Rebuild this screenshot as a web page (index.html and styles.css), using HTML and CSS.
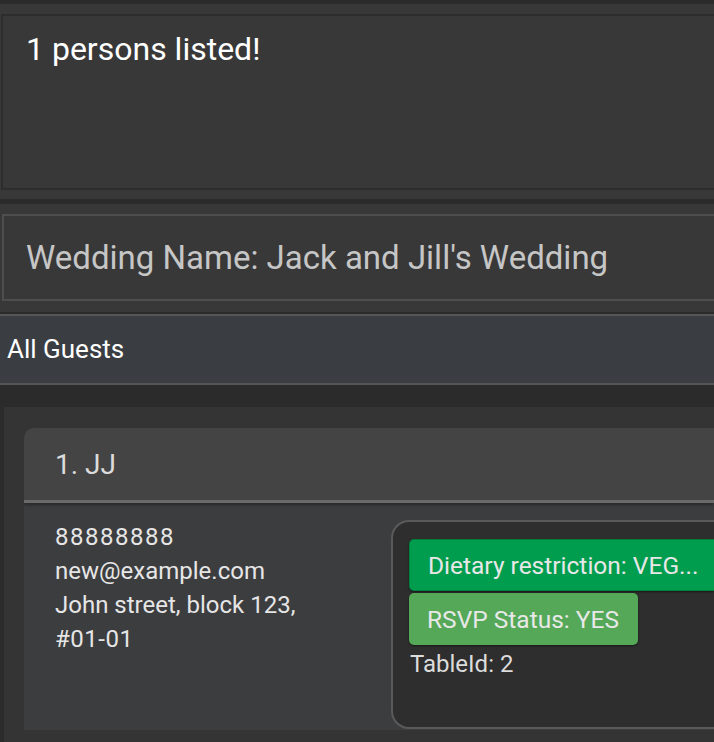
FILE: index.html
```html
<!DOCTYPE html>
<html>
<head>
<meta charset="utf-8">
<link rel="stylesheet" href="styles.css">
</head>
<body>
<div class="app">
  <div class="top-strip"></div>
  <section class="result-pane">
    <div class="result-box">1 persons listed!</div>
  </section>
  <div class="sep"></div>
  <section class="wedding-pane">
    <div class="wedding-box">Wedding Name: Jack and Jill's Wedding</div>
  </section>
  <div class="list-title">All Guests</div>
  <section class="list-area">
    <div class="list-panel">
      <article class="card">
        <header class="card-head">1. JJ</header>
        <div class="card-body">
          <div class="contact">
            <div class="phone">88888888</div>
            <div>new@example.com</div>
            <div>John street, block 123,</div>
            <div class="unit">#01-01</div>
          </div>
          <div class="details">
            <div class="tag tag-diet">Dietary restriction: VEG...</div>
            <div class="tag tag-rsvp">RSVP Status: YES</div>
            <div class="table-id">TableId: 2</div>
          </div>
        </div>
      </article>
    </div>
  </section>
</div>
</body>
</html>
```
FILE: styles.css
```css
html, body {
  margin: 0;
  padding: 0;
  background: #2b2b2b;
  overflow: hidden;
}
body {
  width: 714px;
  height: 742px;
  font-family: Roboto, "Noto Sans", sans-serif;
}
.app {
  width: 714px;
}
.top-strip {
  height: 4px;
  background: #2b2b2b;
}
.result-pane {
  background: #383838;
  padding: 10px 0 9px 1px;
}
.result-box {
  height: 176px;
  box-sizing: border-box;
  border: 2px solid #2d2d2d;
  border-right: none;
  background: #383838;
  color: #ffffff;
  font-size: 32px;
  line-height: 38px;
  padding: 14px 0 0 23px;
}
.sep {
  height: 5px;
  background: #2b2b2b;
}
.wedding-pane {
  background: #383838;
  padding: 10px 0 11px 2px;
}
.wedding-box {
  height: 87px;
  box-sizing: border-box;
  border: 2px solid #4e4e4e;
  border-right: none;
  color: #c6c6c6;
  font-size: 33px;
  display: flex;
  align-items: center;
  padding-left: 22px;
}
.list-title {
  border-top: 2px solid #2b2b2b;
  height: 69px;
  background: #3a3e42;
  border-bottom: 2px solid #555555;
  box-shadow: inset 0 2px 0 #555555;
  color: #ffffff;
  font-size: 26px;
  display: flex;
  align-items: center;
  padding-left: 7px;
}
.list-area {
  padding: 22px 0 0 4px;
  background: #2b2b2b;
}
.list-panel {
  background: #343434;
  padding: 21px 0 12px 20px;
}
.card {
  border-radius: 10px 0 0 0;
  overflow: hidden;
  background: #3c3d3f;
}
.card-head {
  height: 72px;
  background: #444444;
  color: #dcdcdc;
  font-size: 28px;
  display: flex;
  align-items: center;
  padding-left: 31px;
  border-bottom: 3px solid #6a6a6a;
  box-shadow: 0 2px 3px rgba(0,0,0,0.35);
  position: relative;
}
.card-body {
  display: flex;
  padding: 17px 0 0 31px;
  height: 210px;
}
.contact {
  width: 336px;
  flex: none;
  color: #e6e6e6;
  font-size: 24px;
  line-height: 34px;
}
.phone {
  letter-spacing: 1.5px;
}
.unit {
  letter-spacing: 0.5px;
}
.details {
  flex: 1;
  min-width: 0;
  height: 209px;
  box-sizing: border-box;
  border: 2px solid #5a5a5a;
  border-right: none;
  border-radius: 18px 0 0 18px;
  background: #2e2e2e;
  padding: 17px 0 0 16px;
  display: flex;
  flex-direction: column;
  align-items: flex-start;
  gap: 2px;
  overflow: hidden;
}
.tag {
  font-size: 24.5px;
  color: #e8e8e8;
  white-space: nowrap;
  height: 52px;
  box-sizing: border-box;
  display: flex;
  align-items: center;
  padding: 0 19px 0 18px;
  border-radius: 5px;
  box-shadow: 0 1px 2px rgba(0,0,0,0.5);
}
.tag-diet {
  align-self: stretch;
  background: #009d4f;
  border: 1px solid #007f3d;
  border-right: none;
  border-radius: 5px 0 0 5px;
}
.tag-rsvp {
  background: #55a858;
}
.table-id {
  color: #dcdcdc;
  font-size: 24px;
  margin-top: 3px;
  padding-left: 1px;
}
```
